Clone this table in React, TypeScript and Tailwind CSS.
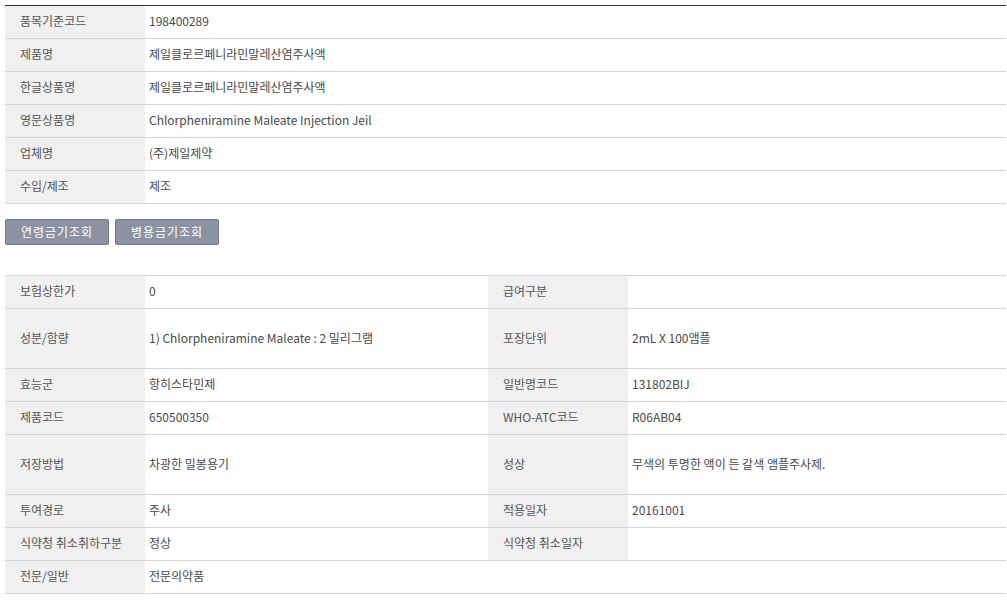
import React from "react";

const font = { fontFamily: '"Noto Sans CJK KR", "Noto Sans", sans-serif' };

const top: [string, string][] = [
  ["품목기준코드", "198400289"],
  ["제품명", "제일클로르페니라민말레산염주사액"],
  ["한글상품명", "제일클로르페니라민말레산염주사액"],
  ["영문상품명", "Chlorpheniramine Maleate Injection Jeil"],
  ["업체명", "(주)제일제약"],
  ["수입/제조", "제조"],
];

type Row = { h1: string; v1: string; h2?: string; v2?: string; tall?: boolean };

const bottom: Row[] = [
  { h1: "보험상한가", v1: "0", h2: "급여구분", v2: "" },
  { h1: "성분/함량", v1: "1) Chlorpheniramine Maleate : 2 밀리그램", h2: "포장단위", v2: "2mL X 100앰플", tall: true },
  { h1: "효능군", v1: "항히스타민제", h2: "일반명코드", v2: "131802BIJ" },
  { h1: "제품코드", v1: "650500350", h2: "WHO-ATC코드", v2: "R06AB04" },
  { h1: "저장방법", v1: "차광한 밀봉용기", h2: "성상", v2: "무색의 투명한 액이 든 갈색 앰플주사제.", tall: true },
  { h1: "투여경로", v1: "주사", h2: "적용일자", v2: "20161001" },
  { h1: "식약청 취소취하구분", v1: "정상", h2: "식약청 취소일자", v2: "" },
  { h1: "전문/일반", v1: "전문의약품" },
];

const th = "bg-[#eff0ef] text-[#555] font-normal text-left pl-[15px] pb-[2px] align-middle";
const td = "text-[#4a4a4a] font-normal text-left pl-[4px] pb-[2px] align-middle";

export default function App() {
  return (
    <div className="bg-white w-[1007px] h-[600px] pt-[5px] pl-[5px] text-[12px]" style={font}>
      <table className="w-[1001px] border-collapse table-fixed border-t border-t-[#333]">
        <colgroup>
          <col className="w-[140px]" />
          <col />
        </colgroup>
        <tbody>
          {top.map(([h, v]) => (
            <tr key={h} className="h-[33px] border-b border-b-[#d6d6d6]">
              <th className={th}>{h}</th>
              <td className={td}>{v}</td>
            </tr>
          ))}
        </tbody>
      </table>

      <div className="flex gap-[6px] mt-[15px]">
        <button className="w-[104px] h-[26px] bg-[#8b93a3] border border-[#717a8a] rounded-[2px] text-white text-[12px] tracking-[1px]">
          연령금기조회
        </button>
        <button className="w-[104px] h-[26px] bg-[#8b93a3] border border-[#717a8a] rounded-[2px] text-white text-[12px] tracking-[1px]">
          병용금기조회
        </button>
      </div>

      <table className="w-[1001px] border-collapse table-fixed border-t border-t-[#d6d6d6] mt-[30px]">
        <colgroup>
          <col className="w-[140px]" />
          <col className="w-[343px]" />
          <col className="w-[140px]" />
          <col />
        </colgroup>
        <tbody>
          {bottom.map((r) => (
            <tr key={r.h1} className={`${r.tall ? "h-[60px]" : "h-[33px]"} border-b border-b-[#d6d6d6]`}>
              <th className={th}>{r.h1}</th>
              {r.h2 !== undefined ? (
                <>
                  <td className={td}>{r.v1}</td>
                  <th className={th}>{r.h2}</th>
                  <td className={td}>{r.v2}</td>
                </>
              ) : (
                <td className={td} colSpan={3}>
                  {r.v1}
                </td>
              )}
            </tr>
          ))}
        </tbody>
      </table>
    </div>
  );
}
